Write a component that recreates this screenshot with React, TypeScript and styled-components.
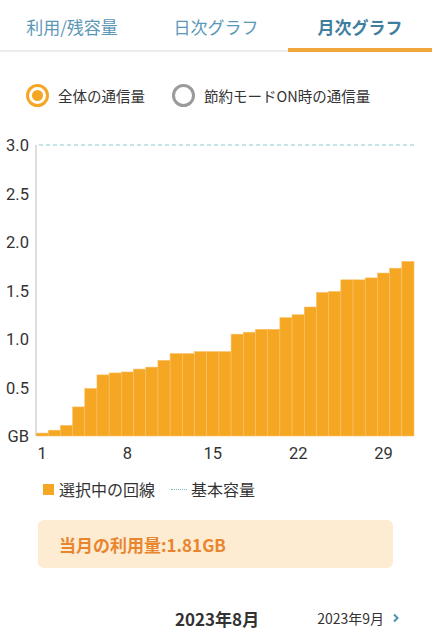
import React, { FC, useState } from 'react'
import styled, { createGlobalStyle } from 'styled-components'

const GlobalStyle = createGlobalStyle`
    html, body {
        margin: 0;
        padding: 0;
        background: #fff;
        font-family: "Noto Sans CJK JP", "Noto Sans", sans-serif;
    }
`

const ORANGE = '#f5a623'

const Page = styled.div`
    width: 432px;
    height: 640px;
    overflow: hidden;
    display: flex;
    flex-direction: column;
`

const Tabs = styled.div`
    display: flex;
    height: 52px;
    border-bottom: 2px solid #ececec;
    box-sizing: border-box;
`

type TabProps = { active?: boolean }
const Tab = styled.div<TabProps>`
    flex: 1;
    display: flex;
    align-items: center;
    justify-content: center;
    font-size: 17px;
    padding-top: 4px;
    box-sizing: border-box;
    color: ${(p) => (p.active ? '#3f7e9e' : '#5b97b6')};
    font-weight: ${(p) => (p.active ? 'bold' : 'normal')};
    border-bottom: 4px solid ${(p) => (p.active ? '#f0a63a' : 'transparent')};
    margin-bottom: -2px;
`

const RadioRow = styled.div`
    display: flex;
    align-items: center;
    gap: 27px;
    padding: 28px 0 0 26px;
    height: 30px;
`

const RadioLabel = styled.label`
    display: flex;
    align-items: center;
    gap: 9px;
    font-size: 14.5px;
    color: #333;
    cursor: pointer;
`

type DotProps = { checked?: boolean }
const RadioDot = styled.span<DotProps>`
    width: 23px;
    height: 23px;
    border-radius: 50%;
    box-sizing: border-box;
    border: 3px solid ${(p) => (p.checked ? ORANGE : '#9a9a9a')};
    display: flex;
    align-items: center;
    justify-content: center;
    &::after {
        content: '';
        width: 11px;
        height: 11px;
        border-radius: 50%;
        background: ${(p) => (p.checked ? ORANGE : 'transparent')};
    }
`

const ChartBox = styled.div`
    margin-top: 33px;
    height: 329px;
`

const Legend = styled.div`
    display: flex;
    align-items: center;
    padding-left: 43px;
    margin-top: 4px;
    height: 26px;
    font-size: 16px;
    color: #333;
`

const Swatch = styled.span`
    width: 11px;
    height: 11px;
    background: ${ORANGE};
    margin-right: 5px;
`

const DotLine = styled.span`
    width: 16px;
    border-top: 1px dotted #7cb9c8;
    margin: 0 4px 0 16px;
`

const UsageBox = styled.div`
    margin: 18px 39px 0 38px;
    height: 48px;
    background: #fdebd2;
    border-radius: 6px;
    display: flex;
    align-items: center;
    padding-left: 21px;
    font-size: 17px;
    font-weight: bold;
    color: #e8862f;
`

const MonthNav = styled.div`
    display: flex;
    align-items: center;
    margin-top: 38px;
    padding-left: 175px;
    height: 24px;
`

const CurrentMonth = styled.span`
    font-size: 17px;
    font-weight: bold;
    color: #333;
`

const NextMonth = styled.span`
    display: flex;
    align-items: center;
    gap: 8px;
    margin-left: 58px;
    font-size: 14px;
    color: #333;
`

const usage = [
    0.03, 0.06, 0.11, 0.3, 0.49, 0.63, 0.65, 0.66, 0.69, 0.71, 0.78, 0.85, 0.85, 0.87, 0.87, 0.87,
    1.05, 1.07, 1.1, 1.1, 1.22, 1.25, 1.33, 1.48, 1.49, 1.61, 1.61, 1.63, 1.68, 1.73, 1.8,
]

const MonthlyChart: FC = () => {
    const left = 36
    const right = 414
    const top = 2
    const bottom = 293
    const perGb = (bottom - top) / 3
    const barW = (right - left) / usage.length
    const yTicks = ['GB', '0.5', '1.0', '1.5', '2.0', '2.5', '3.0']
    const xTicks = [1, 8, 15, 22, 29]
    return (
        <svg width="432" height="320" style={{ display: 'block', overflow: 'visible' }}>
            {usage.map((v, i) => {
                const h = v * perGb
                return (
                    <rect
                        key={i}
                        x={left + i * barW}
                        y={bottom - h}
                        width={barW}
                        height={h}
                        fill={ORANGE}
                        stroke="#f8c26a"
                        strokeWidth="0.6"
                    />
                )
            })}
            <line x1={left} y1={top} x2={left} y2={bottom} stroke="#c8c8c8" strokeWidth="1.2" />
            <line x1={left + 3} y1={top} x2={right} y2={top} stroke="#8ccbcc" strokeWidth="1" strokeDasharray="4 3" />
            {yTicks.map((t, i) => (
                <text
                    key={t}
                    x="29"
                    y={bottom - (i * perGb) / 2 + 6}
                    textAnchor="end"
                    fontSize="16.5"
                    fill="#333"
                    fontFamily="Roboto, sans-serif"
                >
                    {t}
                </text>
            ))}
            {xTicks.map((d) => (
                <text
                    key={d}
                    x={left + (d - 0.5) * barW}
                    y="316"
                    textAnchor="middle"
                    fontSize="16.5"
                    fill="#333"
                    fontFamily="Roboto, sans-serif"
                >
                    {d}
                </text>
            ))}
        </svg>
    )
}

const App: FC = () => {
    const [mode, setMode] = useState<'all' | 'save'>('all')
    return (
        <Page>
            <GlobalStyle />
            <Tabs>
                <Tab>利用/残容量</Tab>
                <Tab>日次グラフ</Tab>
                <Tab active>月次グラフ</Tab>
            </Tabs>
            <RadioRow>
                <RadioLabel onClick={() => setMode('all')}>
                    <RadioDot checked={mode === 'all'} />
                    全体の通信量
                </RadioLabel>
                <RadioLabel onClick={() => setMode('save')}>
                    <RadioDot checked={mode === 'save'} />
                    節約モードON時の通信量
                </RadioLabel>
            </RadioRow>
            <ChartBox>
                <MonthlyChart />
            </ChartBox>
            <Legend>
                <Swatch />
                選択中の回線
                <DotLine />
                基本容量
            </Legend>
            <UsageBox>当月の利用量:1.81GB</UsageBox>
            <MonthNav>
                <CurrentMonth>2023年8月</CurrentMonth>
                <NextMonth>
                    2023年9月
                    <svg width="8" height="10" viewBox="0 0 8 10">
                        <path d="M2 1.5 L5.5 5 L2 8.5" fill="none" stroke="#4a90b0" strokeWidth="2" />
                    </svg>
                </NextMonth>
            </MonthNav>
        </Page>
    )
}

export default App
